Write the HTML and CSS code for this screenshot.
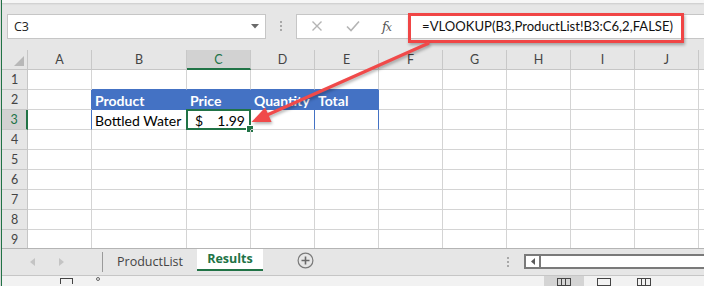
FILE: index.html
```html
<!DOCTYPE html>
<html>
<head>
<meta charset="utf-8">
<link rel="stylesheet" href="styles.css">
</head>
<body>
<div class="app">
  <div class="edge"></div>
  <div class="main">
    <div class="topstrip"></div>
    <div class="fbar">
      <div class="namebox">
        <span class="nb-text">C3</span>
        <svg class="caret" width="8" height="5" viewBox="0 0 8 5"><polygon points="0,0 8,0 4,4.5" fill="#6a6a6a"/></svg>
      </div>
      <div class="grip"><i></i><i></i><i></i></div>
      <div class="fbox">
        <svg class="ico" width="12" height="12" viewBox="0 0 12 12"><path d="M1.5 1.5 L10.5 10.5 M10.5 1.5 L1.5 10.5" stroke="#b4b4b4" stroke-width="1.4" fill="none"/></svg>
        <svg class="ico chk" width="14" height="12" viewBox="0 0 14 12"><path d="M1 6.5 L5 10.5 L13 1.5" stroke="#b4b4b4" stroke-width="1.6" fill="none"/></svg>
        <span class="fx">f<span class="fxx">x</span></span>
        <div class="formula">=VLOOKUP(B3,ProductList!B3:C6,2,FALSE)</div>
      </div>
    </div>

    <div class="grid">
      <div class="h corner"><span class="tri"></span></div>
      <div class="h ch">A</div><div class="h ch">B</div><div class="h ch sel">C</div><div class="h ch">D</div><div class="h ch">E</div><div class="h ch">F</div><div class="h ch">G</div><div class="h ch">H</div><div class="h ch">I</div><div class="h ch">J</div><div class="h ch"></div>

      <div class="h rh">1</div>
      <div class="c bl"></div><div class="c bb"></div><div class="c bb"></div><div class="c bb"></div><div class="c bb"></div><div class="c"></div><div class="c"></div><div class="c"></div><div class="c"></div><div class="c"></div><div class="c"></div>

      <div class="h rh">2</div>
      <div class="c br"></div><div class="c th">Product</div><div class="c th">Price</div><div class="c th ov">Quantity</div><div class="c th">Total</div><div class="c"></div><div class="c"></div><div class="c"></div><div class="c"></div><div class="c"></div><div class="c"></div>

      <div class="h rh rsel">3</div>
      <div class="c br"></div><div class="c td">Bottled Water</div><div class="c td acct"><span>$</span><span>1.99</span><div class="selbox"><i class="handle"></i></div></div><div class="c br"></div><div class="c br"></div><div class="c"></div><div class="c"></div><div class="c"></div><div class="c"></div><div class="c"></div><div class="c"></div>

      <div class="h rh">4</div>
      <div class="c"></div><div class="c"></div><div class="c"></div><div class="c"></div><div class="c"></div><div class="c"></div><div class="c"></div><div class="c"></div><div class="c"></div><div class="c"></div><div class="c"></div>
      <div class="h rh">5</div>
      <div class="c"></div><div class="c"></div><div class="c"></div><div class="c"></div><div class="c"></div><div class="c"></div><div class="c"></div><div class="c"></div><div class="c"></div><div class="c"></div><div class="c"></div>
      <div class="h rh">6</div>
      <div class="c"></div><div class="c"></div><div class="c"></div><div class="c"></div><div class="c"></div><div class="c"></div><div class="c"></div><div class="c"></div><div class="c"></div><div class="c"></div><div class="c"></div>
      <div class="h rh">7</div>
      <div class="c"></div><div class="c"></div><div class="c"></div><div class="c"></div><div class="c"></div><div class="c"></div><div class="c"></div><div class="c"></div><div class="c"></div><div class="c"></div><div class="c"></div>
      <div class="h rh">8</div>
      <div class="c"></div><div class="c"></div><div class="c"></div><div class="c"></div><div class="c"></div><div class="c"></div><div class="c"></div><div class="c"></div><div class="c"></div><div class="c"></div><div class="c"></div>
      <div class="h rh">9</div>
      <div class="c"></div><div class="c"></div><div class="c"></div><div class="c"></div><div class="c"></div><div class="c"></div><div class="c"></div><div class="c"></div><div class="c"></div><div class="c"></div><div class="c"></div>
      <div class="h rh"></div>
      <div class="c"></div><div class="c"></div><div class="c"></div><div class="c"></div><div class="c"></div><div class="c"></div><div class="c"></div><div class="c"></div><div class="c"></div><div class="c"></div><div class="c"></div>
    </div>

    <div class="tabbar">
      <div class="navs">
        <svg width="5" height="8" viewBox="0 0 5 8"><polygon points="5,0 5,8 0,4" fill="#c4c4c4"/></svg>
        <svg width="5" height="8" viewBox="0 0 5 8"><polygon points="0,0 0,8 5,4" fill="#c4c4c4"/></svg>
      </div>
      <div class="tsep"></div>
      <div class="tab">ProductList</div>
      <div class="tab active">Results</div>
      <svg class="plus" width="17" height="17" viewBox="0 0 17 17"><circle cx="8.5" cy="8.5" r="7.4" fill="none" stroke="#7a7a7a" stroke-width="1.2"/><path d="M8.5 4.5 V12.5 M4.5 8.5 H12.5" stroke="#6a6a6a" stroke-width="1.6"/></svg>
      <div class="spacer"></div>
      <div class="grip2"><i></i><i></i><i></i></div>
      <div class="hscroll">
        <div class="sbtn"><svg width="4" height="7" viewBox="0 0 4 7"><polygon points="4,0 4,7 0,3.5" fill="#5a5a5a"/></svg></div>
        <div class="strack"></div>
      </div>
    </div>
    <div class="status">
      <div class="st-left"><span class="sicon1"></span><span class="sicon2"></span></div>
      <div class="views">
        <div class="vbtn on"><span class="vi grid3"></span></div>
        <div class="vbtn"><span class="vi page"></span></div>
        <div class="vbtn"><span class="vi grid3"></span></div>
      </div>
    </div>
  </div>
  <div class="redbox"></div>
  <svg class="arrow" width="704" height="286" viewBox="0 0 704 286">
    <g class="arrow-g">
      <line x1="428" y1="43.5" x2="266" y2="115.5" stroke="#f04a4a" stroke-width="3.2" stroke-linecap="round"/>
      <polygon points="251.5,122 265.2,107.6 271.6,121.9" fill="#f04a4a"/>
    </g>
  </svg>
</div>
</body>
</html>
```
FILE: styles.css
```css
* { box-sizing: border-box; }
html, body { margin: 0; padding: 0; }
body {
  width: 704px; height: 286px; overflow: hidden;
  background: #e6e6e6;
  font-family: "Lato", "Open Sans", sans-serif;
}
.app { position: relative; display: flex; width: 704px; height: 286px; overflow: hidden; }
.edge { width: 2px; flex: none; border-left: 1px solid #d8d8d8; background: #217346; }
.main { flex: 1; display: flex; flex-direction: column; min-width: 0; }

.topstrip { height: 3px; background: #f6f6f6; box-shadow: 0 1px 2px rgba(0,0,0,0.12); }

.fbar { display: flex; align-items: center; height: 25px; margin-top: 11px; padding-left: 5px; }
.namebox {
  width: 259px; height: 25px; background: #fff; border: 1px solid #c6c6c6;
  display: flex; align-items: center; justify-content: space-between; padding: 0 6px 0 6px;
}
.nb-text { font-family: "Open Sans", sans-serif; font-size: 12.5px; color: #222; }
.caret { margin-top: 1px; }
.grip { width: 30px; display: flex; flex-direction: column; align-items: center; gap: 2px; }
.grip i, .grip2 i { display: block; width: 2px; height: 2px; background: #a8a8a8; }
.fbox {
  flex: 1; height: 25px; background: #fff; border: 1px solid #c6c6c6; border-right: none;
  display: flex; align-items: center; padding-left: 14px;
}
.ico { flex: none; }
.chk { margin-left: 23px; }
.fx { margin-left: 22px; font-family: "DejaVu Serif", serif; font-style: italic; font-size: 13px; color: #555; letter-spacing: -1px; }
.fxx { font-size: 11px; }
.formula { margin-left: 31px; font-family: "Lato", sans-serif; font-size: 13.1px; color: #111; white-space: nowrap; }

.redbox {
  position: absolute; left: 408px; top: 13px; width: 276px; height: 30px;
  border: 3px solid #f04545; box-shadow: 1px 2px 3px rgba(0,0,0,0.3);
  pointer-events: none;
}
.arrow { position: absolute; left: 0; top: 0; pointer-events: none; }
.arrow-g { filter: drop-shadow(1px 2px 1.5px rgba(0,0,0,0.3)); }

.grid {
  margin-top: 11px;
  display: grid;
  grid-template-columns: 26px 64px 95px repeat(9, 64px);
  grid-template-rows: repeat(10, 20px) 2px;
  height: 202px; overflow: hidden; background: #fff;
}
.h {
  background: #e6e6e6; color: #444; font-family: "Lato", sans-serif; font-size: 12.5px;
  display: flex; align-items: center; justify-content: center;
}
.ch { border-right: 1px solid #c8c8c8; border-bottom: 1px solid #c6c6c6; padding-top: 1px; }
.corner { border-right: 1px solid #c6c6c6; border-bottom: 1px solid #c6c6c6; position: relative; }
.tri {
  position: absolute; right: 3px; bottom: 3px; width: 0; height: 0;
  border-left: 10px solid transparent; border-bottom: 10px solid #b8b8b8;
}
.rh { border-right: 1px solid #c6c6c6; border-bottom: 1px solid #c8c8c8; padding-top: 1px; }
.sel { background: #d2d2d2; color: #217346; border-bottom: 2px solid #217346; }
.rsel { background: #d2d2d2; color: #217346; border-right: 2px solid #217346; }

.c { border-right: 1px solid #d4d4d4; border-bottom: 1px solid #d4d4d4; position: relative; }
.bb { border-bottom-color: #4472c4; }
.bl { border-right-color: #d4d4d4; }
.br { border-right-color: #4472c4; }
.th {
  background: #4472c4; border-right-color: #4472c4; border-bottom-color: #4472c4;
  color: #fff; font-weight: 700; font-size: 14px; line-height: 19px; padding: 1px 0 0 3px; white-space: nowrap;
}
.ov { overflow: hidden; }
.td { font-size: 14px; line-height: 19px; padding: 1px 0 0 3px; color: #000; white-space: nowrap; }
.acct { display: flex; justify-content: space-between; padding: 1px 5px 0 8px; }
.selbox {
  position: absolute; left: -1px; top: -1px; right: -1px; bottom: -1px;
  border: 2px solid #217346;
}
.handle {
  position: absolute; right: -4px; bottom: -4px; width: 6px; height: 6px;
  background: #217346; outline: 1px solid #fff;
}

.tabbar {
  height: 28px; border-top: 1px solid #b4b4b4; display: flex; align-items: stretch;
  background: #e6e6e6;
}
.navs { width: 72px; display: flex; align-items: center; gap: 24px; padding-left: 28px; }
.tsep { width: 1px; background: #9a9a9a; margin: 3px 0 3px 28px; }
.tab {
  display: flex; align-items: center; padding: 0 0 0 14px; width: 94px;
  font-family: "Open Sans", sans-serif; font-size: 12.5px; color: #444;
}
.tab.active {
  width: 66px; padding: 0; justify-content: center; background: #fff; color: #217346; font-weight: 700;
  border-bottom: 2px solid #217346; margin-bottom: 4px; font-family: "Open Sans", sans-serif;
}
.plus { align-self: center; margin-left: 34px; margin-top: -2px; }
.spacer { flex: 1; }
.grip2 { display: flex; flex-direction: column; align-items: center; justify-content: center; gap: 2px; width: 12px; margin-right: 10px; }
.hscroll {
  width: 180px; height: 15px; align-self: center; margin-top: -1px; border: 2px solid #7a7a7a; border-right: none;
  background: #fff; display: flex;
}
.sbtn { width: 15px; border-right: 2px solid #7a7a7a; display: flex; align-items: center; justify-content: center; }
.strack { flex: 1; }

.status { flex: 1; background: #f2f2f2; border-top: 1px solid #c6c6c6; display: flex; }
.st-left { width: 542px; position: relative; }
.sicon1 { position: absolute; left: 58px; top: 2px; width: 13px; height: 6px; border: 1px solid #444; border-bottom: none; }
.sicon2 { position: absolute; left: 94px; top: 1px; width: 4px; height: 4px; border: 1px solid #666; border-radius: 50%; }
.views { display: flex; }
.vbtn { width: 40px; display: flex; justify-content: center; padding-top: 2px; }
.vbtn.on { background: #d4d4d4; }
.vi { width: 14px; height: 8px; border: 1px solid #444; }
.grid3 { background: linear-gradient(90deg, transparent 3px, #444 3px, #444 4px, transparent 4px, transparent 7px, #444 7px, #444 8px, transparent 8px); }
```
